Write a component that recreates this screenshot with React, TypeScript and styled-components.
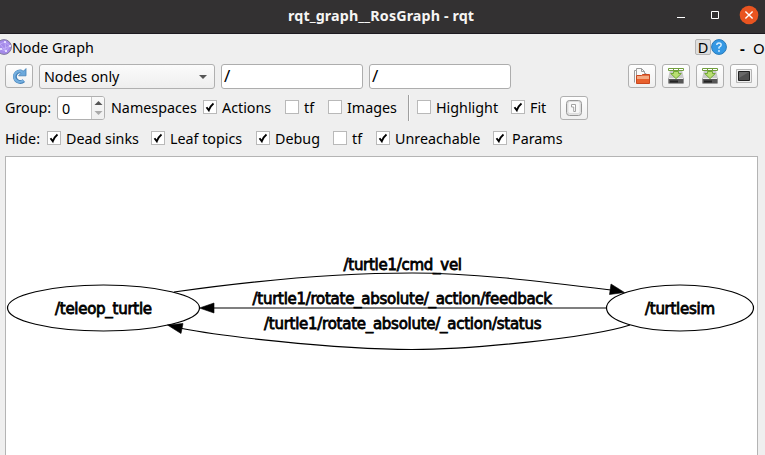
import React from 'react';
import styled, { createGlobalStyle } from 'styled-components';

const GlobalStyle = createGlobalStyle`
  * { box-sizing: border-box; }
  body { margin: 0; background: #efefef; overflow: hidden; }
`;

const Window = styled.div`
  width: 765px;
  height: 455px;
  display: flex;
  flex-direction: column;
  overflow: hidden;
  background: #efefef;
  color: #000;
  font: 14.3px/20px 'Noto Sans', sans-serif;
  white-space: nowrap;
`;

const TitleBar = styled.header`
  flex: none;
  height: 34px;
  display: grid;
  grid-template-columns: 288px 1fr 101px;
  align-items: center;
  background: #333132;
  border-bottom: 1px solid #1d1a20;
  color: #f6f5f4;
`;

const Title = styled.h1`
  grid-column: 2;
  margin: 0;
  padding-bottom: 2px;
  font-size: 14.3px;
  line-height: 20px;
  font-weight: 700;
  letter-spacing: 0.12px;
`;

const WindowControls = styled.div`
  height: 33px;
  svg { display: block; }
`;

const DockBar = styled.div`
  flex: none;
  height: 27px;
  display: flex;
  align-items: center;
  padding-top: 1px;
`;

const NodeIcon = styled.svg`
  flex: none;
  width: 12px;
  height: 18px;
  margin-top: -2px;
`;

const Text = styled.span<{ $w: number }>`
  flex: none;
  width: ${(p) => p.$w}px;
`;

const DockButtons = styled.div`
  display: flex;
  align-items: center;
  width: 70px;
  height: 18px;
  margin: -2px 0 0 auto;
  svg { flex: none; }
`;

const DetachButton = styled.span`
  flex: none;
  width: 16px;
  height: 16px;
  border: 1px solid #b5b5b5;
  border-radius: 2px;
  background: #dedede;
  font-size: 14.5px;
  line-height: 15px;
  text-align: center;
`;

const DockGlyph = styled.span<{ $w: number; $indent?: number; $bold?: boolean }>`
  flex: none;
  width: ${(p) => p.$w}px;
  margin-top: 2px;
  padding-left: ${(p) => p.$indent ?? 0}px;
  font-size: 15px;
  font-weight: ${(p) => (p.$bold ? 700 : 400)};
`;

const Toolbar = styled.div<{ $h: number; $top: number }>`
  flex: none;
  height: ${(p) => p.$h}px;
  padding: ${(p) => p.$top}px 7px 0 5px;
  display: flex;
  align-items: flex-start;
`;

const ToolButton = styled.button`
  flex: none;
  width: 28px;
  height: 24px;
  padding: 0;
  display: grid;
  place-items: center;
  border: 1px solid #b0b0b0;
  border-radius: 3px;
  background: linear-gradient(#fefefe, #f0f0f0);
  svg { display: block; }
`;

const ButtonGroup = styled.div`
  display: flex;
  gap: 6px;
  margin-left: auto;
`;

const Combo = styled.div`
  width: 176px;
  height: 25px;
  margin: 0 6px;
  padding: 0 7px 0 4px;
  display: flex;
  align-items: center;
  justify-content: space-between;
  border: 1px solid #b0b0b0;
  border-radius: 3px;
  background: linear-gradient(#fbfbfb, #eeeeee);
`;

const Field = styled.div`
  width: 142px;
  height: 25px;
  margin-right: 6px;
  padding: 1px 2px;
  border: 1px solid #adadad;
  border-radius: 3px;
  background: #fff;
  font-size: 17px;
`;

const Spin = styled.div`
  width: 48px;
  height: 24px;
  margin-right: 6px;
  display: grid;
  grid-template-columns: 33px 1fr;
  border: 1px solid #b0b0b0;
  border-radius: 3px;
  background: #fff;
  overflow: hidden;
`;

const SpinValue = styled.span`
  padding: 2px 0 0 4px;
`;

const SpinArrows = styled.div`
  border-left: 1px solid #c6c6c6;
  background: linear-gradient(#f9f9f9, #efefef);
  svg { display: block; }
`;

const RowLabel = styled(Text)<{ $drop?: number }>`
  margin-top: ${(p) => p.$drop ?? 0}px;
`;

const CheckItem = styled.label<{ $w: number }>`
  flex: none;
  width: ${(p) => p.$w}px;
  height: 20px;
  display: flex;
  align-items: flex-start;
  gap: 5px;
  padding-top: 1px;
`;

const Box = styled.span`
  flex: none;
  width: 14px;
  height: 14px;
  margin-top: 2px;
  border: 1px solid #b9b9b9;
  background: #fff;
  svg { display: block; }
`;

const CheckGroup = styled.div<{ $drop: number }>`
  display: flex;
  margin-top: ${(p) => p.$drop}px;
`;

const Separator = styled.span`
  flex: none;
  width: 9px;
  height: 26px;
  margin-top: -1px;
  border-left: 1px solid #9f9f9f;
  box-shadow: inset 1px 0 #fafafa;
`;

const GraphView = styled.main`
  flex: 1;
  margin: 0 7px 0 5px;
  border: 1px solid #b4b4b4;
  border-bottom: 0;
  background: #fff;
  svg { display: block; }
`;

type CheckProps = { label: string; checked?: boolean; w: number };

const Check = ({ label, checked, w }: CheckProps) => (
  <CheckItem $w={w}>
    <Box>
      {checked && (
        <svg width="12" height="12" viewBox="0 0 12 12">
          <path d="M2.5 6.2 4.8 9.3Q6.3 5 9.5 2.5" fill="none" stroke="#000" strokeWidth="1.9" />
        </svg>
      )}
    </Box>
    <Text $w={w - 19}>{label}</Text>
  </CheckItem>
);

const RefreshIcon = () => (
  <svg width="16" height="16" viewBox="0 0 16 16">
    <path d="M10.5 3.5A5.3 5.3 0 1 0 12.8 12.6" fill="none" stroke="#4380b8" strokeWidth="3.8" />
    <path d="M15 .6v7.2H7.6l2.3-2.5-1-3 3.8.7Z" fill="#6ca9dc" stroke="#4380b8" strokeWidth=".8" />
    <path d="M11.2 3.9A5.3 5.3 0 1 0 12.4 12.4" fill="none" stroke="#75afdf" strokeWidth="2.3" />
  </svg>
);

const FolderIcon = () => (
  <svg width="16" height="16" viewBox="0 0 16 16">
    <path d="M.5 14.5V2.5h2v-2h5l3 3v2h1.5v7" fill="#fafafa" stroke="#9b9b9b" />
    <path d="M7.5.5v3h3M2.5 2.5v5" fill="none" stroke="#9b9b9b" />
    <path d="M2.5 15.5v-8h5l1-1h7v9Z" fill="#e66b3d" stroke="#c8471f" />
    <path d="M3 8h12v3H3z" fill="#f4aa82" />
    <path d="M3 11h12v4H3z" fill="#e8602c" />
  </svg>
);

const SaveIcon = () => (
  <svg width="16" height="16" viewBox="0 0 16 16">
    <path d="M2 2h12l2 9v4.5H0V11Z" fill="#c9c9c9" />
    <path d="M.5 10.5h15v5H.5z" fill="#565656" />
    <path d="M1 10h14v1H1z" fill="#eee" />
    <path d="M2 13.5h8" stroke="#242424" strokeWidth="2" />
    <path d="M.5.5h15v2H.5z" fill="#fff" stroke="#719f3c" />
    <path d="M5.5 1v2M10.5 1v2" stroke="#719f3c" />
    <path d="M5.5 3.5h5v2h2.8L8 10.6 2.7 5.5h2.8Z" fill="#b9de72" stroke="#72a936" />
  </svg>
);

const ScreenIcon = () => (
  <svg width="16" height="16" viewBox="0 0 16 16">
    <path d="M.5 1.5h15v13H.5z" fill="#efefef" stroke="#b5b5b5" />
    <path d="M2.5 3.5h11v9h-11z" fill="#505050" stroke="#222" />
    <path d="M3 4h10L3 10z" fill="#686868" />
  </svg>
);

const OneIcon = () => (
  <svg width="16" height="16" viewBox="0 0 16 16">
    <rect x=".5" y=".5" width="15" height="15" rx="3" fill="#e3e3e3" stroke="#969696" />
    <rect x="2" y="1.5" width="12" height="12" rx="2" fill="#f7f7f7" stroke="#d2d2d2" strokeWidth=".6" />
    <path d="M5.5 7V4.5h4v7H7.7V7Z" fill="#fff" stroke="#999" strokeWidth=".9" />
  </svg>
);

type LabelProps = { x: number; y: number; w: number; children: string };

const GraphLabel = ({ x, y, w, children }: LabelProps) => (
  <text x={x} y={y} textLength={w} lengthAdjust="spacing">{children}</text>
);

export default function App() {
  return (
    <>
      <GlobalStyle />
      <Window>
        <TitleBar>
          <Title>rqt_graph__RosGraph - rqt</Title>
          <WindowControls>
            <svg width="101" height="33" viewBox="664 0 101 33">
              <path d="M677 17.5h8" stroke="#fff" />
              <path d="M711.5 11.5h7v7h-7z" fill="none" stroke="#fff" />
              <circle cx="749" cy="15" r="9.3" fill="#e95420" />
              <path d="m745.4 11.4 7.2 7.2m0-7.2-7.2 7.2" stroke="#fff" strokeWidth="1.4" />
            </svg>
          </WindowControls>
        </TitleBar>
        <DockBar>
          <NodeIcon viewBox="0 0 12 18">
            <circle cx="4" cy="9" r="7.4" fill="#a58aea" stroke="#817b9c" />
            <path d="M0 6 5 4l5 4-4 5-6-2M5 4l1 9M0 12 10 8M0 6l6 7" fill="none" stroke="#c9b9fa" strokeWidth=".7" />
            <path d="M4 3h2v2H4zm5 4h2v2H9zm-4 5h2v2H5zM0 10h2v2H0z" fill="#e4dcff" />
          </NodeIcon>
          <Text $w={90}>Node Graph</Text>
          <DockButtons>
            <DetachButton>D</DetachButton>
            <svg width="16" height="16" viewBox="0 0 16 16">
              <circle cx="8" cy="8" r="7.4" fill="#3498e4" stroke="#287ab9" />
              <path d="M5.8 6.1Q5.8 4 8 4t2.2 1.9Q10.2 7 8 8.3v1.5" fill="none" stroke="#d8f0ff" strokeWidth="1.4" />
              <circle cx="8" cy="12" r=".9" fill="#d8f0ff" />
            </svg>
            <DockGlyph $w={26} $indent={13} $bold>-</DockGlyph>
            <DockGlyph $w={12}>O</DockGlyph>
          </DockButtons>
        </DockBar>
        <Toolbar $h={32} $top={3}>
          <ToolButton aria-label="Refresh"><RefreshIcon /></ToolButton>
          <Combo>
            Nodes only
            <svg width="8" height="4" viewBox="0 0 8 4"><path d="M0 0h8L4 4z" fill="#555" /></svg>
          </Combo>
          <Field>/</Field>
          <Field>/</Field>
          <ButtonGroup>
            <ToolButton aria-label="Open"><FolderIcon /></ToolButton>
            <ToolButton aria-label="Save dot"><SaveIcon /></ToolButton>
            <ToolButton aria-label="Save SVG"><SaveIcon /></ToolButton>
            <ToolButton aria-label="Save image"><ScreenIcon /></ToolButton>
          </ButtonGroup>
        </Toolbar>
        <Toolbar $h={32} $top={3}>
          <RowLabel $w={52} $drop={2}>Group:</RowLabel>
          <Spin>
            <SpinValue>0</SpinValue>
            <SpinArrows>
              <svg width="13" height="22" viewBox="0 0 13 22">
                <path d="M2.5 8h8l-4-4z" fill="#555" />
                <path d="M2.5 14h8l-4 4z" fill="#aaa" />
              </svg>
            </SpinArrows>
          </Spin>
          <RowLabel $w={92} $drop={2}>Namespaces</RowLabel>
          <CheckGroup $drop={1}>
            <Check label="Actions" checked w={82} />
            <Check label="tf" w={43} />
            <Check label="Images" w={80} />
          </CheckGroup>
          <Separator />
          <CheckGroup $drop={1}>
            <Check label="Highlight" w={94} />
            <Check label="Fit" checked w={49} />
          </CheckGroup>
          <ToolButton aria-label="Zoom to one"><OneIcon /></ToolButton>
        </Toolbar>
        <Toolbar $h={31} $top={3}>
          <RowLabel $w={42} $drop={1}>Hide:</RowLabel>
          <CheckGroup $drop={0}>
            <Check label="Dead sinks" checked w={104} />
            <Check label="Leaf topics" checked w={105} />
            <Check label="Debug" checked w={77} />
            <Check label="tf" w={43} />
            <Check label="Unreachable" checked w={117} />
            <Check label="Params" checked w={70} />
          </CheckGroup>
        </Toolbar>
        <GraphView>
          <svg width="751" height="298" viewBox="6 157 751 298">
            <g fill="none" stroke="#000" strokeWidth="1.2">
              <ellipse cx="103.5" cy="308" rx="96" ry="23" />
              <ellipse cx="680" cy="308" rx="73.5" ry="23" />
              <path d="M174 292C280 277 360 273 412 273C470 273 530 280 611 290" />
              <path d="M213 308H606" />
              <path d="M182 328.5C215 335 330 349.5 412 349.5C470 349.5 590 338 630 325" />
            </g>
            <g fill="#000" stroke="#000" strokeWidth=".6">
              <path d="m624.5 292.5-15 2 1.5-10.5Z" />
              <path d="m199.5 308 14.500-5v10Z" />
              <path d="m167.5 325 15.500-1.500-2 10Z" />
            </g>
            <g fill="#000" stroke="#000" strokeWidth=".8" fontFamily="'DejaVu Sans', sans-serif" fontSize="15">
              <GraphLabel x={55} y={313.5} w={97}>/teleop_turtle</GraphLabel>
              <GraphLabel x={645} y={313.5} w={70}>/turtlesim</GraphLabel>
              <GraphLabel x={343.5} y={269.5} w={118.5}>/turtle1/cmd_vel</GraphLabel>
              <GraphLabel x={252.5} y={303.5} w={299.5}>/turtle1/rotate_absolute/_action/feedback</GraphLabel>
              <GraphLabel x={264} y={328.5} w={277.5}>/turtle1/rotate_absolute/_action/status</GraphLabel>
            </g>
          </svg>
        </GraphView>
      </Window>
    </>
  );
}
